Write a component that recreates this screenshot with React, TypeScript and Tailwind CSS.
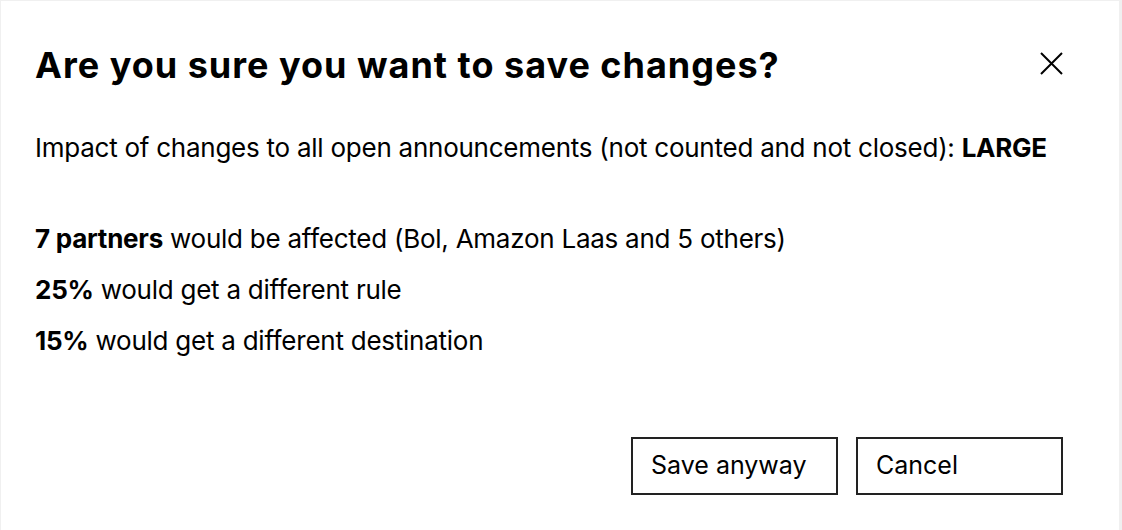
import React from "react";

function CloseIcon() {
  return (
    <svg className="w-[23px] h-[23px]" viewBox="0 0 23 23" fill="none" stroke="currentColor" strokeWidth={2}>
      <path d="M1 1L22 22M22 1L1 22" />
    </svg>
  );
}

export default function App() {
  return (
    <div className="w-[1122px] h-[530px] bg-[#f0f0f0] pt-px pl-px pr-[3px] overflow-hidden">
      <div
        className="h-full bg-white text-black px-[34px] pt-[42px] flex flex-col"
        style={{ fontFamily: "Inter, 'Liberation Sans', sans-serif" }}
      >
        <div className="flex items-start justify-between">
          <h1 className="text-[36px] leading-[44px] font-bold tracking-[1px]">
            Are you sure you want to save changes?
          </h1>
          <button className="mt-[9px] mr-[22px] text-black">
            <CloseIcon />
          </button>
        </div>
        <p className="mt-[46px] text-[26px] leading-[30px] tracking-[-0.25px]">
          Impact of changes to all open announcements (not counted and not closed): <b>LARGE</b>
        </p>
        <div className="mt-[61px] flex flex-col gap-[21px] text-[26px] leading-[30px] tracking-[-0.25px]">
          <p>
            <b>7 partners</b> would be affected (Bol, Amazon Laas and 5 others)
          </p>
          <p>
            <b>25%</b> would get a different rule
          </p>
          <p>
            <b>15%</b> would get a different destination
          </p>
        </div>
        <div className="mt-[81px] flex justify-end gap-[18px] pr-[22px]">
          <button className="w-[207px] h-[58px] border-2 border-[#222] text-left pl-[18px] text-[25px]">
            Save anyway
          </button>
          <button className="w-[207px] h-[58px] border-2 border-[#222] text-left pl-[18px] text-[25px]">
            Cancel
          </button>
        </div>
      </div>
    </div>
  );
}
